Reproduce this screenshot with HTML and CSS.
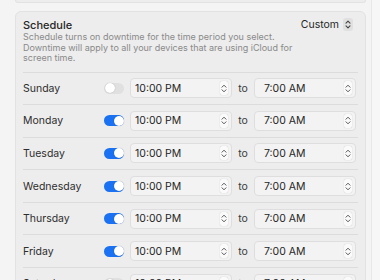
FILE: index.html
```html
<!DOCTYPE html>
<html lang="en">
<head>
  <meta charset="UTF-8" />
  <title>Downtime Schedule</title>
  <link rel="stylesheet" href="styles.css">
</head>
<body>
  <div class="window">
    <div class="content">
      <div class="prev-card"></div>

      <!-- schedule card -->
      <div class="card">
        <div class="head">
          <div class="head-text">
            <div class="title">Schedule</div>
            <div class="desc">Schedule turns on downtime for the time period you select. Downtime will apply to all your devices that are using iCloud for screen time.</div>
          </div>
          <div class="popup">
            <span>Custom</span>
            <span class="popup-btn">
              <svg width="6" height="9" viewBox="0 0 6 9"><path d="M1 3.2 L3 1.2 L5 3.2 M1 5.8 L3 7.8 L5 5.8" fill="none" stroke="#444" stroke-width="1.1" stroke-linecap="round" stroke-linejoin="round"/></svg>
            </span>
          </div>
        </div>

        <div class="row">
          <span class="day">Sunday</span>
          <span class="toggle"></span>
          <span class="field">10:00 PM<i class="step"><svg width="6" height="9" viewBox="0 0 6 9"><path d="M1 3.2 L3 1.2 L5 3.2 M1 5.8 L3 7.8 L5 5.8" fill="none" stroke="#555" stroke-width="1" stroke-linecap="round" stroke-linejoin="round"/></svg></i></span>
          <span class="to">to</span>
          <span class="field">7:00 AM<i class="step"><svg width="6" height="9" viewBox="0 0 6 9"><path d="M1 3.2 L3 1.2 L5 3.2 M1 5.8 L3 7.8 L5 5.8" fill="none" stroke="#555" stroke-width="1" stroke-linecap="round" stroke-linejoin="round"/></svg></i></span>
        </div>
        <div class="row">
          <span class="day">Monday</span>
          <span class="toggle on"></span>
          <span class="field">10:00 PM<i class="step"><svg width="6" height="9" viewBox="0 0 6 9"><path d="M1 3.2 L3 1.2 L5 3.2 M1 5.8 L3 7.8 L5 5.8" fill="none" stroke="#555" stroke-width="1" stroke-linecap="round" stroke-linejoin="round"/></svg></i></span>
          <span class="to">to</span>
          <span class="field">7:00 AM<i class="step"><svg width="6" height="9" viewBox="0 0 6 9"><path d="M1 3.2 L3 1.2 L5 3.2 M1 5.8 L3 7.8 L5 5.8" fill="none" stroke="#555" stroke-width="1" stroke-linecap="round" stroke-linejoin="round"/></svg></i></span>
        </div>
        <div class="row">
          <span class="day">Tuesday</span>
          <span class="toggle on"></span>
          <span class="field">10:00 PM<i class="step"><svg width="6" height="9" viewBox="0 0 6 9"><path d="M1 3.2 L3 1.2 L5 3.2 M1 5.8 L3 7.8 L5 5.8" fill="none" stroke="#555" stroke-width="1" stroke-linecap="round" stroke-linejoin="round"/></svg></i></span>
          <span class="to">to</span>
          <span class="field">7:00 AM<i class="step"><svg width="6" height="9" viewBox="0 0 6 9"><path d="M1 3.2 L3 1.2 L5 3.2 M1 5.8 L3 7.8 L5 5.8" fill="none" stroke="#555" stroke-width="1" stroke-linecap="round" stroke-linejoin="round"/></svg></i></span>
        </div>
        <div class="row">
          <span class="day">Wednesday</span>
          <span class="toggle on"></span>
          <span class="field">10:00 PM<i class="step"><svg width="6" height="9" viewBox="0 0 6 9"><path d="M1 3.2 L3 1.2 L5 3.2 M1 5.8 L3 7.8 L5 5.8" fill="none" stroke="#555" stroke-width="1" stroke-linecap="round" stroke-linejoin="round"/></svg></i></span>
          <span class="to">to</span>
          <span class="field">7:00 AM<i class="step"><svg width="6" height="9" viewBox="0 0 6 9"><path d="M1 3.2 L3 1.2 L5 3.2 M1 5.8 L3 7.8 L5 5.8" fill="none" stroke="#555" stroke-width="1" stroke-linecap="round" stroke-linejoin="round"/></svg></i></span>
        </div>
        <div class="row">
          <span class="day">Thursday</span>
          <span class="toggle on"></span>
          <span class="field">10:00 PM<i class="step"><svg width="6" height="9" viewBox="0 0 6 9"><path d="M1 3.2 L3 1.2 L5 3.2 M1 5.8 L3 7.8 L5 5.8" fill="none" stroke="#555" stroke-width="1" stroke-linecap="round" stroke-linejoin="round"/></svg></i></span>
          <span class="to">to</span>
          <span class="field">7:00 AM<i class="step"><svg width="6" height="9" viewBox="0 0 6 9"><path d="M1 3.2 L3 1.2 L5 3.2 M1 5.8 L3 7.8 L5 5.8" fill="none" stroke="#555" stroke-width="1" stroke-linecap="round" stroke-linejoin="round"/></svg></i></span>
        </div>
        <div class="row">
          <span class="day">Friday</span>
          <span class="toggle on"></span>
          <span class="field">10:00 PM<i class="step"><svg width="6" height="9" viewBox="0 0 6 9"><path d="M1 3.2 L3 1.2 L5 3.2 M1 5.8 L3 7.8 L5 5.8" fill="none" stroke="#555" stroke-width="1" stroke-linecap="round" stroke-linejoin="round"/></svg></i></span>
          <span class="to">to</span>
          <span class="field">7:00 AM<i class="step"><svg width="6" height="9" viewBox="0 0 6 9"><path d="M1 3.2 L3 1.2 L5 3.2 M1 5.8 L3 7.8 L5 5.8" fill="none" stroke="#555" stroke-width="1" stroke-linecap="round" stroke-linejoin="round"/></svg></i></span>
        </div>
        <div class="row">
          <span class="day">Saturday</span>
          <span class="toggle"></span>
          <span class="field">10:00 PM<i class="step"><svg width="6" height="9" viewBox="0 0 6 9"><path d="M1 3.2 L3 1.2 L5 3.2 M1 5.8 L3 7.8 L5 5.8" fill="none" stroke="#555" stroke-width="1" stroke-linecap="round" stroke-linejoin="round"/></svg></i></span>
          <span class="to">to</span>
          <span class="field">7:00 AM<i class="step"><svg width="6" height="9" viewBox="0 0 6 9"><path d="M1 3.2 L3 1.2 L5 3.2 M1 5.8 L3 7.8 L5 5.8" fill="none" stroke="#555" stroke-width="1" stroke-linecap="round" stroke-linejoin="round"/></svg></i></span>
        </div>
      </div>
    </div>
    <div class="scroll-track"></div>
  </div>
</body>
</html>
```

FILE: styles.css
```css
/*── base ──*/
body {
  margin: 0;
  background: #f4f4f4;
  font-family: Inter, "Liberation Sans", sans-serif;
  color: #262626;
  overflow: hidden;
}
.window {
  display: flex;
  height: 280px;
}
.content {
  flex: 1;
  padding: 0 5px 0 15px;
}
.scroll-track {
  width: 8px;
  background: #f7f7f7;
  border-left: 1px solid #e9e9e9;
}
/*── cards ──*/
.prev-card {
  height: 2px;
  background: #ededed;
  border: 1px solid #e2e2e2;
  border-top: none;
  border-radius: 0 0 6px 6px;
}
.card {
  margin-top: 8px;
  background: #ededed;
  border: 1px solid #e2e2e2;
  border-radius: 6px;
  padding: 0 7px;
}
.head {
  display: flex;
  justify-content: space-between;
  padding: 5px 0 8px;
  border-bottom: 1px solid #dcdcdc;
}
.head-text {
  flex: 1;
  min-width: 0;
}
.title {
  font-size: 11px;
  font-weight: 500;
  line-height: 14px;
  margin-top: 1px;
}
.desc {
  font-size: 9px;
  line-height: 10.5px;
  color: #8a8a8a;
  max-width: 290px;
  margin-top: 0;
}
.popup {
  flex-shrink: 0;
  display: flex;
  align-items: flex-start;
  gap: 4px;
  font-size: 10.5px;
  line-height: 14px;
  padding-top: 1px;
  padding-right: 5px;
}
.popup-btn {
  display: flex;
  align-items: center;
  justify-content: center;
  width: 10px;
  height: 13px;
  background: #e0e0e0;
  border-radius: 3px;
}
/*── day rows ──*/
.row {
  display: flex;
  align-items: center;
  height: 31.6px;
  border-bottom: 1px solid #dcdcdc;
  font-size: 10.5px;
}
.day {
  width: 81px;
  color: #2e2e2e;
}
.toggle {
  position: relative;
  width: 20px;
  height: 11px;
  border-radius: 6px;
  background: #e0e0e0;
  margin-right: 6px;
}
.toggle::after {
  content: "";
  position: absolute;
  top: 0.5px;
  left: 0.5px;
  width: 10px;
  height: 10px;
  border-radius: 50%;
  background: #fff;
  box-shadow: 0 0 1px rgba(0,0,0,0.3);
}
.toggle.on {
  background: #1a72f2;
}
.toggle.on::after {
  left: 9.5px;
}
.field {
  display: flex;
  align-items: center;
  justify-content: space-between;
  box-sizing: border-box;
  width: 102px;
  height: 20px;
  padding: 0 3px 0 4px;
  background: #f3f3f3;
  border: 1px solid #dedede;
  border-radius: 4px;
  font-size: 10.5px;
  color: #262626;
}
.field:last-child {
  padding-left: 9px;
}
.step {
  display: flex;
  align-items: center;
  justify-content: center;
  width: 8px;
  height: 14px;
  background: #fafafa;
  border-radius: 2px;
  box-shadow: 0 0 1px rgba(0,0,0,0.25);
}
.to {
  width: 22px;
  text-align: center;
  color: #3a3a3a;
}
```
